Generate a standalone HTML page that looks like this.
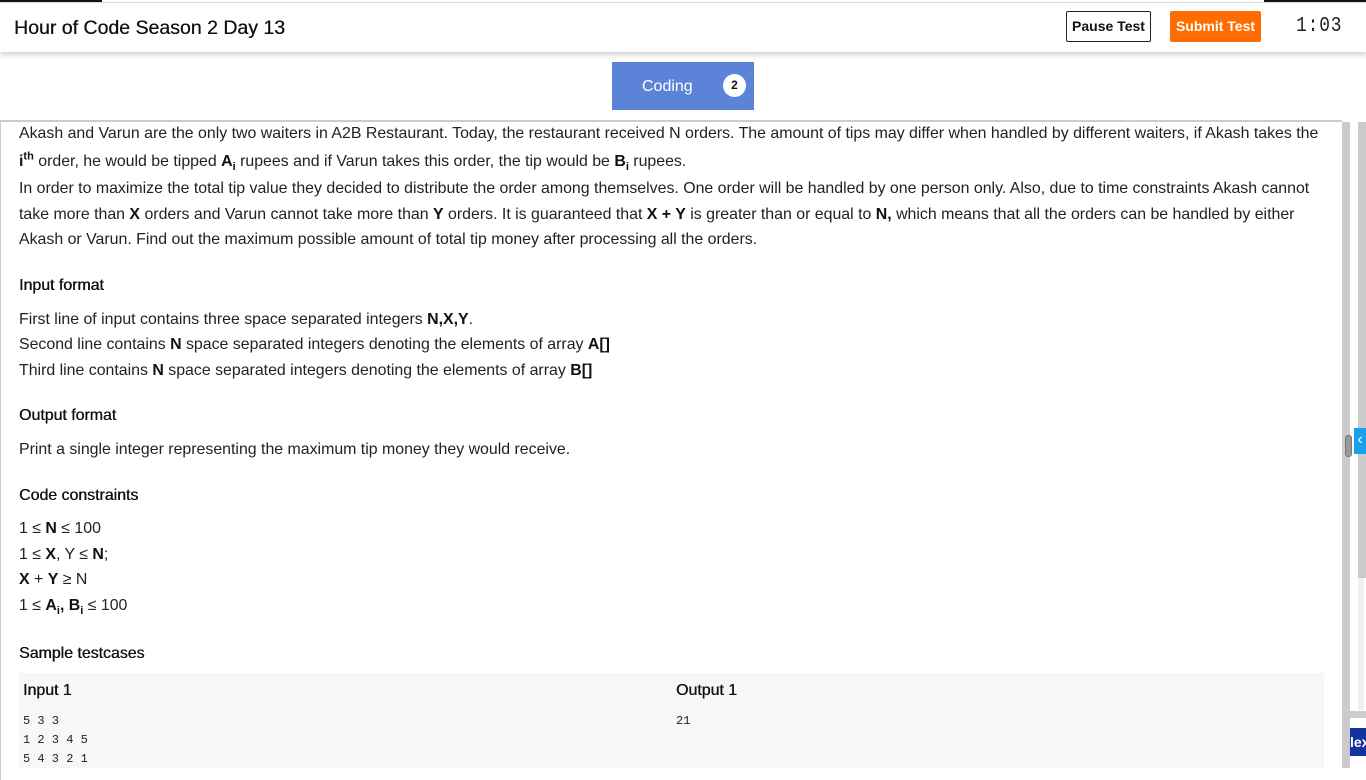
<!DOCTYPE html>
<html><head><meta charset="utf-8"><style>
*{margin:0;padding:0;box-sizing:border-box}
body{width:1366px;height:768px;overflow:hidden;background:#fff;font-family:"Liberation Sans",Arial,sans-serif;color:#222;position:relative}
.topline{position:absolute;top:0;height:2px;background:#111}
.hdr{position:absolute;left:0;top:2px;width:1366px;height:50px;background:#fff;box-shadow:0 3px 5px rgba(0,0,0,.18);border-top:1px solid #ddd}
.title{position:absolute;left:14px;top:14px;font-size:19.5px;color:#111;text-shadow:0.3px 0 #111}
.pause{position:absolute;left:1066px;top:8px;width:85px;height:31px;border:1px solid #222;border-radius:2px;font-size:14px;font-weight:bold;text-align:center;line-height:29px;color:#111}
.submit{position:absolute;left:1170px;top:8px;width:91px;height:31px;background:#ff6c00;border-radius:2px;color:#fff;font-size:14px;font-weight:bold;text-align:center;line-height:31px}
.timer{position:absolute;left:1292px;top:12px;font-family:"Liberation Mono",monospace;font-size:21px;color:#222;letter-spacing:1px;transform:scaleX(.85)}
.tab{position:absolute;left:612px;top:62px;width:142px;height:48px;background:#5b84d8;color:#fff;font-size:16px}
.tab span{position:absolute;left:30px;top:16px}
.badge{position:absolute;left:111px;top:12px;width:23px;height:23px;border-radius:50%;background:#fff;color:#111;font-size:12px;font-weight:bold;text-align:center;line-height:23px}
.panel{position:absolute;left:0;top:120px;width:1342px;height:660px;border-top:2px solid #ccc;border-left:1px solid #ccc}
.l{position:absolute;left:19px;margin-top:2px;font-size:15.9px;line-height:20px;white-space:nowrap;color:#222}
.h{color:#111;text-shadow:0.4px 0 #111}
b{font-weight:bold;color:#111}
sup,sub{line-height:0;font-size:11px}
.sb{position:absolute;left:1342px;top:122px;width:8px;height:646px;background:#cbcbcb}
.sb2{position:absolute;left:1358px;top:122px;width:8px;height:456px;background:#cbcbcb}
.sb2b{position:absolute;left:1358px;top:578px;width:6px;height:132px;background:#eef0f2}
.tc{position:absolute;left:19px;top:673px;width:1305px;height:95px;background:#f7f7f7}
.mono{font-family:"Liberation Mono",monospace;font-size:12px;position:absolute;line-height:19px;color:#222}
</style></head><body>
<div class="hdr">
<div class="title">Hour of Code Season 2 Day 13</div>
<div class="pause">Pause Test</div>
<div class="submit">Submit Test</div>
<div class="timer">1:03</div>
</div>
<div class="topline" style="left:0;width:102px"></div>
<div class="topline" style="left:1264px;width:102px"></div>
<div class="tab"><span>Coding</span><div class="badge">2</div></div>
<div class="panel"></div>
<div class="l" style="top:122px">Akash and Varun are the only two waiters in A2B Restaurant. Today, the restaurant received N orders. The amount of tips may differ when handled by different waiters, if Akash takes the</div>
<div class="l" style="top:150px"><b>i<sup>th</sup></b> order, he would be tipped <b>A<sub>i</sub></b> rupees and if Varun takes this order, the tip would be <b>B<sub>i</sub></b> rupees.</div>
<div class="l" style="top:177px">In order to maximize the total tip value they decided to distribute the order among themselves. One order will be handled by one person only. Also, due to time constraints Akash cannot</div>
<div class="l" style="top:203px">take more than <b>X</b> orders and Varun cannot take more than <b>Y</b> orders. It is guaranteed that <b>X + Y</b> is greater than or equal to <b>N,</b> which means that all the orders can be handled by either</div>
<div class="l" style="top:228px">Akash or Varun. Find out the maximum possible amount of total tip money after processing all the orders.</div>
<div class="l h" style="top:274px">Input format</div>
<div class="l" style="top:308px">First line of input contains three space separated integers <b>N,X,Y</b>.</div>
<div class="l" style="top:333px">Second line contains <b>N</b> space separated integers denoting the elements of array <b>A[]</b></div>
<div class="l" style="top:359px">Third line contains <b>N</b> space separated integers denoting the elements of array <b>B[]</b></div>
<div class="l h" style="top:404px">Output format</div>
<div class="l" style="top:438px">Print a single integer representing the maximum tip money they would receive.</div>
<div class="l h" style="top:484px">Code constraints</div>
<div class="l" style="top:517px">1 ≤ <b>N</b> ≤ 100</div>
<div class="l" style="top:543px">1 ≤ <b>X</b>, Y ≤ <b>N</b>;</div>
<div class="l" style="top:568px"><b>X</b> + <b>Y</b> ≥ N</div>
<div class="l" style="top:594px">1 ≤ <b>A<sub>i</sub>, B<sub>i</sub></b> ≤ 100</div>
<div class="l h" style="top:642px">Sample testcases</div>
<div class="tc"></div>
<div class="l h" style="top:679px;left:23px">Input 1</div>
<div class="l h" style="top:679px;left:676px">Output 1</div>
<div class="mono" style="left:23px;top:712px">5 3 3<br>1 2 3 4 5<br>5 4 3 2 1</div>
<div class="mono" style="left:676px;top:712px">21</div>
<div class="sb"></div>
<div class="sb2"></div>
<div class="sb2b"></div>
<div style="position:absolute;left:1345px;top:435px;width:7px;height:22px;background:#999;border-radius:3px;border:1px solid #777"></div>
<div style="position:absolute;left:1354px;top:428px;width:12px;height:26px;background:#1aa1ee;color:#fff;font-size:16px;line-height:24px;text-align:center">‹</div>
<div style="position:absolute;left:1350px;top:711px;width:16px;height:7px;background:#ccc"></div>
<div style="position:absolute;left:1350px;top:728px;width:16px;height:28px;background:#1334a0;color:#fff;font-size:14px;font-weight:bold;line-height:28px;overflow:hidden">lex</div>
</body></html>
